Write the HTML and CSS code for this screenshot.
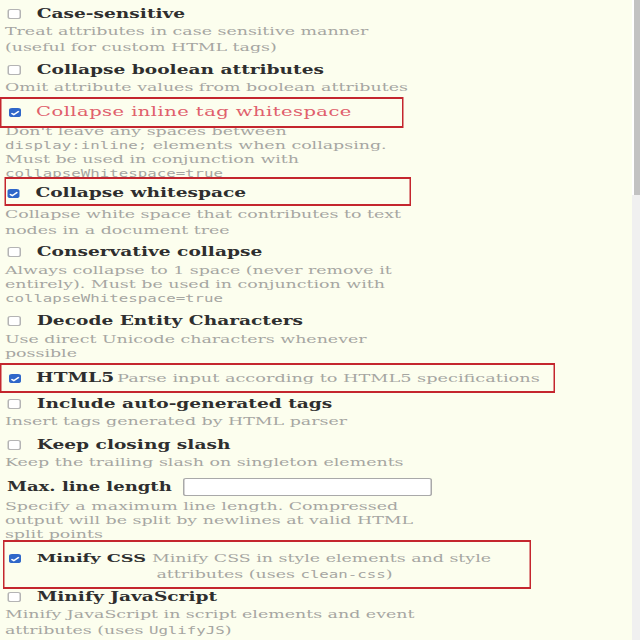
FILE: index.html
```html
<!DOCTYPE html>
<html lang="en">
<head>
    <meta charset="UTF-8">
    <title>Minifier options</title>
    <link rel="stylesheet" href="styles.css">
</head>
<body>
    <div class="viewport">
        <div class="options">
            <div class="opt">
                <div class="row"><span class="check"></span><span class="title">Case-sensitive</span></div>
                <div class="desc">Treat attributes in case sensitive manner<br>(useful for custom HTML tags)</div>
            </div>

            <div class="opt sp-6">
                <div class="row"><span class="check"></span><span class="title">Collapse boolean attributes</span></div>
                <div class="desc">Omit attribute values from boolean attributes</div>
            </div>

            <!-- highlighted -->
            <div class="mark mark-1">
                <div class="row"><span class="check on"><svg viewBox="0 0 10 10"><path d="M2 6 L4 7.6 L8.2 3.4"/></svg></span><span class="title red">Collapse inline tag whitespace</span></div>
            </div>
            <div class="desc tight under">Don't leave any spaces between<br><code>display:inline;</code> elements when collapsing.<br>Must be used in conjunction with<br><code>collapseWhitespace=true</code></div>

            <div class="mark mark-2">
                <div class="row"><span class="check on"><svg viewBox="0 0 10 10"><path d="M2 6 L4 7.6 L8.2 3.4"/></svg></span><span class="title">Collapse whitespace</span></div>
            </div>
            <div class="desc">Collapse white space that contributes to text<br>nodes in a document tree</div>

            <div class="opt sp-5">
                <div class="row"><span class="check"></span><span class="title">Conservative collapse</span></div>
                <div class="desc tight sp-2">Always collapse to 1 space (never remove it<br>entirely). Must be used in conjunction with<br><code>collapseWhitespace=true</code></div>
            </div>

            <div class="opt sp-7">
                <div class="row"><span class="check"></span><span class="title">Decode Entity Characters</span></div>
                <div class="desc tight sp-2">Use direct Unicode characters whenever<br>possible</div>
            </div>

            <div class="mark mark-3">
                <div class="row"><span class="check on"><svg viewBox="0 0 10 10"><path d="M2 6 L4 7.6 L8.2 3.4"/></svg></span><span class="title">HTML5</span><span class="desc inline">Parse input according to HTML5 specifications</span></div>
            </div>

            <div class="opt sp-2">
                <div class="row"><span class="check"></span><span class="title">Include auto-generated tags</span></div>
                <div class="desc">Insert tags generated by HTML parser</div>
            </div>

            <div class="opt sp-7">
                <div class="row"><span class="check"></span><span class="title">Keep closing slash</span></div>
                <div class="desc">Keep the trailing slash on singleton elements</div>
            </div>

            <div class="opt sp-8">
                <div class="row"><label class="title field-label" for="max-line">Max. line length</label><input id="max-line" class="field" type="text"></div>
                <div class="desc tight sp-3">Specify a maximum line length. Compressed<br>output will be split by newlines at valid HTML<br>split points</div>
            </div>

            <div class="mark mark-4">
                <div class="row top"><span class="check on"><svg viewBox="0 0 10 10"><path d="M2 6 L4 7.6 L8.2 3.4"/></svg></span><span class="title slim">Minify CSS</span><span class="desc block">Minify CSS in style elements and style<br><span class="indent">attributes (uses <code>clean-css</code>)</span></span></div>
            </div>

            <div class="opt under-1">
                <div class="row"><span class="check"></span><span class="title">Minify JavaScript</span></div>
                <div class="desc">Minify JavaScript in script elements and event<br>attributes (uses <code>UglifyJS</code>)</div>
            </div>
        </div>
    </div>
    <div class="scrollbar"><div class="thumb"></div></div>
</body>
</html>
```

FILE: styles.css
```css
body {
    margin: 0;
    display: flex;
    height: 640px;
    overflow: hidden;
    background-color: #fcfeee;
    font-family: 'DejaVu Serif', serif;
}
.viewport {
    width: 632px;
    height: 640px;
    overflow: hidden;
}
/* the original screenshot is stretched sideways */
.options {
    width: 421px;
    padding: 5px 0 0 3.3px;
    transform: scaleX(1.5);
    transform-origin: 0 0;
}
.row {
    display: flex;
    align-items: center;
    height: 18px;
}
.row.top {
    align-items: flex-start;
    height: auto;
}
.check {
    width: 7.3px;
    height: 8px;
    margin-left: 1.4px;
    margin-right: 10.5px;
    border: 1px solid #b4b4b4;
    border-radius: 2px;
    background: #fff;
    flex-shrink: 0;
}
.check.on {
    width: 8px;
    height: 9px;
    border: none;
    background: #2f67c9;
}
.check svg {
    display: block;
    width: 100%;
    height: 100%;
}
.check svg path {
    fill: none;
    stroke: #fff;
    stroke-width: 1.5;
}
.title {
    font-size: 12.4px;
    font-weight: bold;
    color: #2e2e2e;
    line-height: 18px;
    white-space: nowrap;
}
.title.red {
    font-size: 13px;
    color: #e0606c;
    font-weight: normal;
    letter-spacing: 0.3px;
}
.title.slim {
    font-size: 11.8px;
}
.desc {
    font-size: 11.6px;
    line-height: 16px;
    color: #a6a6a2;
    white-space: nowrap;
}
.desc.tight {
    line-height: 14px;
}
.desc.inline {
    font-size: 11.8px;
    margin-left: 2px;
    line-height: 18px;
}
.desc.block {
    font-size: 11.6px;
    margin-left: 4px;
    margin-top: 1px;
}
.indent {
    padding-left: 3px;
}
code {
    font-family: 'DejaVu Sans Mono', monospace;
    font-size: 10.5px;
}
.sp-2 { margin-top: 2px; }
.sp-3 { margin-top: 3px; }
.sp-5 { margin-top: 5px; }
.sp-6 { margin-top: 6px; }
.sp-7 { margin-top: 7px; }
.sp-8 { margin-top: 8px; }
.under { margin-top: -4px; }
.under-1 { margin-top: -1px; }

/* red highlight boxes drawn over the list */
.mark {
    position: relative;
    z-index: 1;
    box-sizing: border-box;
    border: 2px solid #c4262e;
    border-left-width: 1.4px;
    border-right-width: 1.4px;
    background: #fcfeee;
}
.mark-1 {
    width: 269px;
    margin: 2px 0 0 -3.3px;
    padding: 4px 0 5px 3.2px;
}
.mark-2 {
    width: 271px;
    margin: -3px 0 0 -0.6px;
    padding: 5px 0 2px 1px;
}
.mark-2 .check {
    margin-left: 0.4px;
}
.mark-3 {
    width: 370px;
    margin: 3px 0 0 -3.3px;
    padding: 4px 0 4px 3.2px;
}
.mark-4 {
    width: 352px;
    margin: -1px 0 0 -1.3px;
    padding: 7px 0 5px 1.6px;
}
.mark-4 .check {
    margin-top: 5px;
}
.field-label {
    font-size: 12px;
    width: 117.3px;
    margin-left: 1.4px;
}
.field {
    box-sizing: border-box;
    width: 166px;
    height: 18px;
    margin: 0;
    padding: 0;
    border: 1px solid #a9a9a9;
    border-left-width: 0.8px;
    border-right-width: 0.8px;
    border-radius: 2px;
    background: #fff;
}
.scrollbar {
    width: 8px;
    height: 640px;
    background: #f0f0f0;
}
.thumb {
    height: 195px;
    border-left: 2px solid #fff;
    background: #c2c2c2;
}
```
